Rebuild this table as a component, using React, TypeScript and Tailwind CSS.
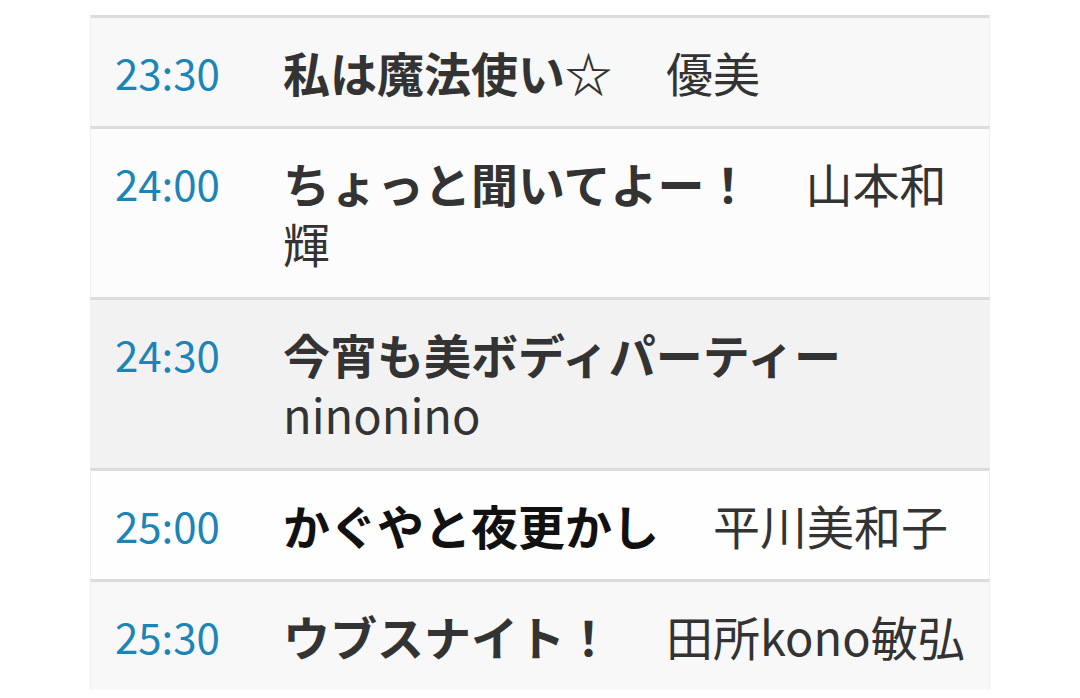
const programs = [
  { time: "23:30", title: "私は魔法使い☆", name: "優美", bg: "bg-[#f8f8f8]" },
  { time: "24:00", title: "ちょっと聞いてよー！", name: "山本和輝", bg: "bg-[#fcfcfc]" },
  { time: "24:30", title: "今宵も美ボディパーティー", name: "ninonino", bg: "bg-[#f2f2f2]" },
  { time: "25:00", title: "かぐやと夜更かし", name: "平川美和子", bg: "bg-[#fefefe]", current: true },
  { time: "25:30", title: "ウブスナイト！", name: "田所kono敏弘", bg: "bg-[#f8f8f8]" },
];

export default function App() {
  return (
    <div className="min-h-[698px] bg-white pt-[15px] font-['Noto_Sans_CJK_JP',sans-serif]">
      <ul className="mx-[90px] w-[900px]">
        {programs.map((p) => (
          <li
            key={p.time}
            className={`flex border-t-[3px] border-l border-r border-t-[#dcdcdc] border-l-[#f0f0f0] border-r-[#f0f0f0] py-6 pl-[24px] pr-[16px] ${p.bg}`}
          >
            <div className="w-[168px] shrink-0 text-[42px] leading-[60px] text-[#1b85b8]">
              {p.time}
            </div>
            <p className="min-w-0 flex-1 text-[47px] leading-[60px] text-[#333]">
              <span
                className={`mr-[54px] font-bold ${p.current ? "text-[#111]" : "text-[#333]"}`}
              >
                {p.title}
              </span>
              <span>{p.name}</span>
            </p>
          </li>
        ))}
      </ul>
    </div>
  );
}
